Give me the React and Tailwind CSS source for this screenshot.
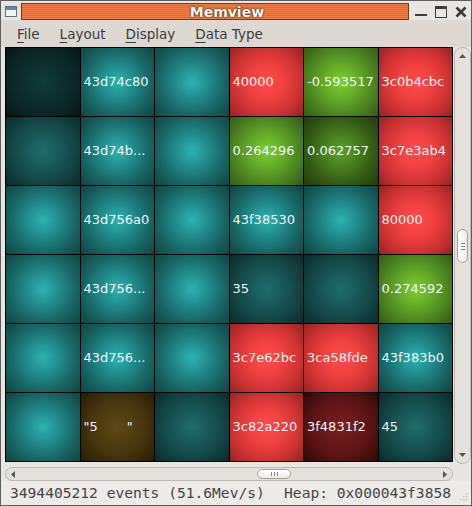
import React from 'react';

const TONES = {
  vdark: 'bg-[radial-gradient(circle,#113a3a_0%,#0b2626_65%,#061616_100%)]',
  dteal: 'bg-[radial-gradient(circle,#1e6e6d_0%,#134444_65%,#0a2a2a_100%)]',
  teal: 'bg-[radial-gradient(circle,#2db3b0_0%,#21898a_35%,#176362_68%,#0f4545_100%)]',
  red: 'bg-[radial-gradient(circle,#ff4c4c_0%,#f04040_35%,#cc3232_68%,#962222_100%)]',
  dred: 'bg-[radial-gradient(circle,#7c1e1e_0%,#5a1414_60%,#2e0808_100%)]',
  green: 'bg-[radial-gradient(circle,#7dcf32_0%,#64aa28_35%,#4a8220_68%,#325a14_100%)]',
  dgreen: 'bg-[radial-gradient(circle,#5ca228_0%,#44781c_40%,#315814_68%,#213c0c_100%)]',
  brown: 'bg-[radial-gradient(circle,#5e4816_0%,#46360e_55%,#261c06_100%)]',
};

const CELLS = [
  ['vdark', ''], ['teal', '43d74c80'], ['teal', ''], ['red', '40000'], ['green', '-0.593517'], ['red', '3c0b4cbc'],
  ['dteal', ''], ['teal', '43d74b...'], ['teal', ''], ['green', '0.264296'], ['dgreen', '0.062757'], ['red', '3c7e3ab4'],
  ['teal', ''], ['teal', '43d756a0'], ['teal', ''], ['teal', '43f38530'], ['teal', ''], ['red', '80000'],
  ['teal', ''], ['teal', '43d756...'], ['teal', ''], ['dteal', '35'], ['dteal', ''], ['green', '0.274592'],
  ['teal', ''], ['teal', '43d756...'], ['teal', ''], ['red', '3c7e62bc'], ['red', '3ca58fde'], ['teal', '43f383b0'],
  ['teal', ''], ['brown', '"5       "'], ['dteal', ''], ['red', '3c82a220'], ['dred', '3f4831f2'], ['dteal', '45'],
];

function Menu({ label }) {
  return (
    <span className="text-[13.5px] text-[#3c3c3c]">
      <span className="underline underline-offset-[3px]">{label[0]}</span>
      {label.slice(1)}
    </span>
  );
}

function Arrow({ dir }) {
  const pts = {
    up: '0,4 3.5,0 7,4',
    down: '0,0 3.5,4 7,0',
    left: '4,0 0,3.5 4,7',
    right: '0,0 4,3.5 0,7',
  }[dir];
  const vert = dir === 'up' || dir === 'down';
  return (
    <svg width={vert ? 7 : 4} height={vert ? 4 : 7}>
      <polygon points={pts} fill="#555" />
    </svg>
  );
}

export default function App() {
  return (
    <div
      className="w-[472px] h-[506px] flex flex-col border border-[#5e5e5e] bg-[#e8e6e3] overflow-hidden"
      style={{ fontFamily: '"DejaVu Sans", sans-serif' }}
    >
      {/* title bar */}
      <div className="h-[19px] flex items-center pl-[4px] pr-[4px]">
        <svg width="12" height="11" className="mt-[1px]">
          <rect x="0.5" y="0.5" width="11" height="10" fill="#f4f4f4" stroke="#6b6b6b" />
          <rect x="1" y="1" width="10" height="3" fill="#5d86c4" />
        </svg>
        <div className="ml-[4px] w-[394px] h-[17px] mt-[2px] border border-[#7a3817] flex items-center justify-center pl-[24px] bg-[repeating-linear-gradient(180deg,#ef7b46_0px,#ef7b46_1px,#e26a37_1px,#e26a37_2px)]">
          <span className="text-[14px] font-bold text-white leading-none [text-shadow:0_0_2px_#3a1404,0_0_1px_#3a1404]">
            Memview
          </span>
        </div>
        <div className="flex items-center ml-[6px] gap-[8px] mt-[2px]">
          <svg width="12" height="12">
            <rect x="0" y="8" width="12" height="2" fill="#3c3c3c" />
          </svg>
          <svg width="12" height="12">
            <rect x="0.5" y="0.5" width="11" height="11" fill="none" stroke="#3c3c3c" />
            <rect x="0" y="0" width="12" height="3" fill="#3c3c3c" />
          </svg>
          <svg width="12" height="12">
            <path d="M1.5 1.5 L10.5 10.5 M10.5 1.5 L1.5 10.5" stroke="#3c3c3c" strokeWidth="2.6" />
          </svg>
        </div>
      </div>

      {/* menu bar */}
      <div className="h-[27px] bg-[#ddd8d2] flex items-center gap-[20px] pl-[16px] pt-[2px]">
        <Menu label="File" />
        <Menu label="Layout" />
        <Menu label="Display" />
        <Menu label="Data Type" />
      </div>

      {/* view + vertical scrollbar */}
      <div className="flex pl-[4px]">
        <div className="w-[448px] h-[415px] grid grid-cols-6 grid-rows-6 gap-px p-px bg-black">
          {CELLS.map(([tone, text], i) => (
            <div
              key={i}
              className={`${TONES[tone]} flex items-center pl-[3px] text-[13px] text-[#f0f5f5] whitespace-pre overflow-hidden`}
            >
              {text}
            </div>
          ))}
        </div>
        <div className="ml-[1px] w-[17px] h-[417px] rounded-[8px] border border-[#bdb8b2] bg-[#e4e1dd] flex flex-col items-center justify-between py-[4px] relative">
          <div className="h-[8px] flex items-center"><Arrow dir="up" /></div>
          <div className="absolute left-[2px] top-[181px] w-[11px] h-[34px] rounded-[6px] border border-[#a5a09a] bg-[linear-gradient(90deg,#ffffff,#ecebe9)] flex flex-col items-center justify-center gap-[2px]">
            <div className="w-[4px] h-px bg-[#888]" />
            <div className="w-[4px] h-px bg-[#888]" />
            <div className="w-[4px] h-px bg-[#888]" />
          </div>
          <div className="h-[8px] flex items-center"><Arrow dir="down" /></div>
        </div>
      </div>

      {/* horizontal scrollbar */}
      <div className="flex pl-[4px] pt-[3px]">
        <div className="w-[448px] h-[14px] rounded-[7px] border border-[#bdb8b2] bg-[#e4e1dd] flex items-center justify-between px-[5px] relative">
          <Arrow dir="left" />
          <div className="absolute left-[251px] top-[1px] w-[34px] h-[10px] rounded-[6px] border border-[#a5a09a] bg-[linear-gradient(180deg,#ffffff,#ecebe9)] flex items-center justify-center gap-[2px]">
            <div className="w-px h-[4px] bg-[#888]" />
            <div className="w-px h-[4px] bg-[#888]" />
            <div className="w-px h-[4px] bg-[#888]" />
          </div>
          <Arrow dir="right" />
        </div>
      </div>

      {/* status bar */}
      <div className="flex-1 bg-[#edebe8] flex items-center pl-[9px] relative">
        <div
          className="w-[441px] flex justify-between text-[14.6px] text-[#464646] whitespace-pre"
          style={{ fontFamily: '"DejaVu Sans Mono", monospace' }}
        >
          <span>3494405212 events (51.6Mev/s)</span>
          <span>Heap: 0x000043f3858</span>
        </div>
        <svg width="10" height="10" className="absolute right-[3px] bottom-[3px]">
          {[[8, 0], [8, 3], [5, 3], [8, 6], [5, 6], [2, 6]].map(([x, y], i) => (
            <rect key={i} x={x} y={y + 1} width="1.5" height="1.5" fill="#c8c4be" />
          ))}
        </svg>
      </div>
    </div>
  );
}
